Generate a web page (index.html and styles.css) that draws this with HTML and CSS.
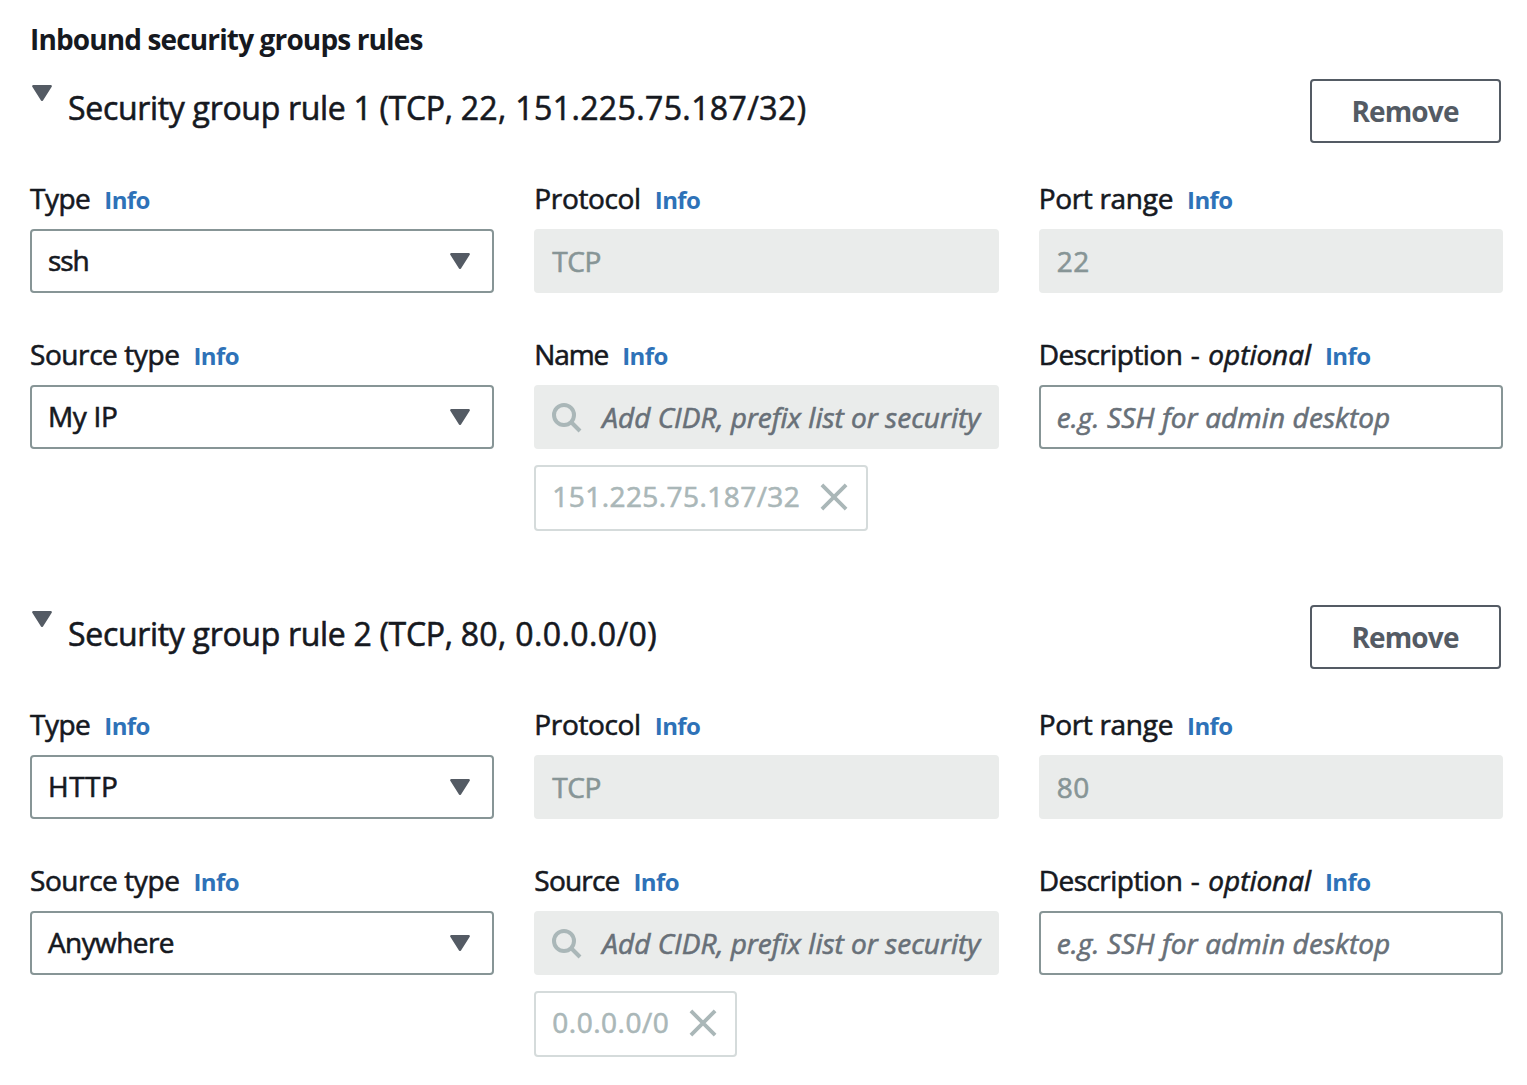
FILE: index.html
```html
<!DOCTYPE html>
<html lang="en">
<head>
<meta charset="utf-8">
<title>Inbound security groups rules</title>
<link rel="stylesheet" href="styles.css">
</head>
<body>
<svg width="0" height="0" class="sprite" aria-hidden="true">
  <symbol id="caret" viewBox="0 0 20 16"><path d="M1.3 1.2h17.4L10 14.8z" stroke="currentColor" stroke-width="2.4" stroke-linejoin="round" fill="currentColor"/></symbol>
  <symbol id="search" viewBox="0 0 30 30"><g fill="none" stroke="currentColor" stroke-width="4"><circle cx="12" cy="12" r="10"/><path d="M19 19l9 9"/></g></symbol>
  <symbol id="close" viewBox="0 0 28 28"><path d="M1.9 1.9l24.2 24.2M26.1 1.9L1.9 26.1" fill="none" stroke="currentColor" stroke-width="3.8"/></symbol>
</svg>
<main class="panel">
  <h1 class="title">Inbound security groups rules</h1>

  <section class="rule">
    <header class="rule-head">
      <svg class="caret"><use href="#caret"/></svg>
      <h2 class="rule-name"><span class="words">Security group rule 1 (TCP, </span><span class="digits">22, 151.225.75.187/32)</span></h2>
      <button class="remove">Remove</button>
    </header>
    <div class="grid">
      <div class="field">
        <div class="label"><span class="t-type">Type</span><a class="info">Info</a></div>
        <div class="box select"><span class="t-ssh">ssh</span><svg class="caret"><use href="#caret"/></svg></div>
      </div>
      <div class="field">
        <div class="label"><span class="t-protocol">Protocol</span><a class="info">Info</a></div>
        <div class="box disabled"><span class="t-tcp">TCP</span></div>
      </div>
      <div class="field">
        <div class="label"><span class="t-port">Port range</span><a class="info">Info</a></div>
        <div class="box disabled"><span class="t-num">22</span></div>
      </div>
      <div class="field">
        <div class="label"><span class="t-stype">Source type</span><a class="info">Info</a></div>
        <div class="box select"><span class="t-myip">My IP</span><svg class="caret"><use href="#caret"/></svg></div>
      </div>
      <div class="field">
        <div class="label"><span class="t-name">Name</span><a class="info">Info</a></div>
        <div class="box disabled search"><svg class="lens"><use href="#search"/></svg><span class="placeholder">Add CIDR, prefix list or security</span></div>
        <div class="tag"><span class="t-ip">151.225.75.187/32</span><svg class="close"><use href="#close"/></svg></div>
      </div>
      <div class="field">
        <div class="label"><span class="t-desc">Description</span><span class="dash">-</span><i class="t-opt">optional</i><a class="info">Info</a></div>
        <div class="box"><span class="placeholder t-eg">e.g. SSH for admin desktop</span></div>
      </div>
    </div>
  </section>

  <section class="rule">
    <header class="rule-head">
      <svg class="caret"><use href="#caret"/></svg>
      <h2 class="rule-name"><span class="words">Security group rule 2 (TCP, </span><span class="digits">80, 0.0.0.0/0)</span></h2>
      <button class="remove">Remove</button>
    </header>
    <div class="grid">
      <div class="field">
        <div class="label"><span class="t-type">Type</span><a class="info">Info</a></div>
        <div class="box select"><span class="t-http">HTTP</span><svg class="caret"><use href="#caret"/></svg></div>
      </div>
      <div class="field">
        <div class="label"><span class="t-protocol">Protocol</span><a class="info">Info</a></div>
        <div class="box disabled"><span class="t-tcp">TCP</span></div>
      </div>
      <div class="field">
        <div class="label"><span class="t-port">Port range</span><a class="info">Info</a></div>
        <div class="box disabled"><span class="t-num">80</span></div>
      </div>
      <div class="field">
        <div class="label"><span class="t-stype">Source type</span><a class="info">Info</a></div>
        <div class="box select"><span class="t-any">Anywhere</span><svg class="caret"><use href="#caret"/></svg></div>
      </div>
      <div class="field">
        <div class="label"><span class="t-source">Source</span><a class="info">Info</a></div>
        <div class="box disabled search"><svg class="lens"><use href="#search"/></svg><span class="placeholder">Add CIDR, prefix list or security</span></div>
        <div class="tag"><span class="t-any-ip">0.0.0.0/0</span><svg class="close"><use href="#close"/></svg></div>
      </div>
      <div class="field">
        <div class="label"><span class="t-desc">Description</span><span class="dash">-</span><i class="t-opt">optional</i><a class="info">Info</a></div>
        <div class="box"><span class="placeholder t-eg">e.g. SSH for admin desktop</span></div>
      </div>
    </div>
  </section>
</main>
</body>
</html>
```
FILE: styles.css
```css
* { box-sizing: border-box; }
body {
  margin: 0;
  background: #fff;
  color: #16191f;
  font: 28px/40px "Open Sans", "Noto Sans", sans-serif;
  -webkit-text-stroke: 0.6px currentColor;
  white-space: nowrap;
}
.sprite { position: absolute; }
svg { flex: none; display: block; }
.panel { padding: 19px 24px 0 30px; }
.title { margin: 0 0 20px; font-size: 28px; line-height: 40px; font-weight: 700; letter-spacing: -0.87px; -webkit-text-stroke: 0; }

.rule + .rule { margin-top: 74px; }
.rule-head { display: flex; align-items: flex-start; height: 64px; padding: 0 2px; }
.rule-head .caret { margin-top: 6px; }
.caret { width: 20px; height: 16px; color: #545b64; }
.rule-name { flex: 1; margin: 9px 0 0 16px; font-size: 32px; line-height: 40px; font-weight: 400; }
.words { letter-spacing: -0.31px; white-space: pre; }
.digits { letter-spacing: 0.38px; }
.remove {
  width: 191px; height: 64px; padding: 0 1px 0 0;
  border: 2px solid #545b64; border-radius: 4px; background: #fff; color: #545b64;
  font: 700 28px/40px "Open Sans", "Noto Sans", sans-serif; letter-spacing: -0.86px;
  -webkit-text-stroke: 0;
}

.grid { display: grid; grid-template-columns: repeat(3, 1fr); gap: 41px 40px; margin-top: 35px; }
.label { display: flex; align-items: baseline; height: 40px; margin-bottom: 11px; }
.info { margin-left: 14px; font-size: 24px; font-weight: 700; color: #2e72b8; letter-spacing: -0.6px; -webkit-text-stroke: 0; }
.dash { margin: 0 8.5px 0 8.5px; }
.box {
  display: flex; align-items: center; height: 64px; padding: 0 16px;
  border: 2px solid #879596; border-radius: 4px;
}
.select { padding-right: 22px; justify-content: space-between; }
.select span { margin-top: -2px; }
.disabled { border-color: #eaeceb; background: #eaeceb; color: #879596; }
.placeholder { font-style: italic; color: #687078; }
.search .placeholder { margin-left: 20px; }
.lens { width: 30px; height: 30px; margin-top: 1px; color: #aab7b8; }
.tag {
  display: flex; align-items: center; width: max-content; height: 66px; margin-top: 16px; padding: 0 18px 2px 16px;
  border: 2px solid #d5dbdb; border-radius: 4px; color: #aab7b8;
}
.tag span { margin-top: -2px; }
.close { width: 28px; height: 28px; margin-left: 20px; }

/* Tracking for each label and value */
.t-type { letter-spacing: -0.5px; }
.t-ssh { letter-spacing: -1.1px; }
.t-protocol { letter-spacing: -0.35px; }
.t-tcp { letter-spacing: -0.5px; }
.t-num { letter-spacing: 0.6px; }
.t-port { letter-spacing: -0.31px; }
.t-stype { letter-spacing: -0.42px; }
.t-myip { letter-spacing: -0.33px; }
.t-name { letter-spacing: -1.1px; }
.t-ip { letter-spacing: 0.44px; }
.t-any-ip { letter-spacing: 0.5px; }
.t-desc { letter-spacing: -0.53px; }
.t-opt { letter-spacing: -0.05px; }
.t-eg { letter-spacing: 0.1px; }
.t-http { letter-spacing: 0.5px; }
.t-any { letter-spacing: -0.6px; }
.t-source { letter-spacing: -0.8px; }
```
